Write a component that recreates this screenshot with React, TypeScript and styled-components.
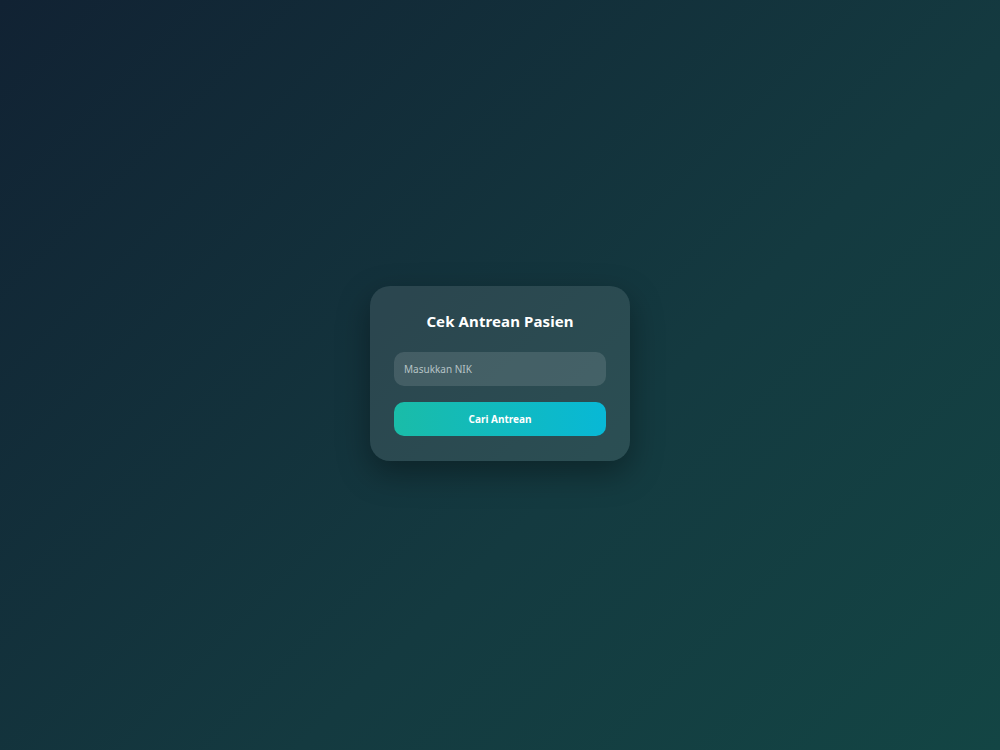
import React, {useState} from 'react'
import styled, {createGlobalStyle} from 'styled-components'

const GlobalStyle = createGlobalStyle`
  * {
    box-sizing: border-box;
  }
  html, body {
    margin: 0;
    padding: 0;
  }
  body {
    font-family: 'Noto Sans', 'Open Sans', 'Liberation Sans', sans-serif;
  }
`

const Page = styled.main`
  min-height: 100vh;
  padding-bottom: 4px;
  display: flex;
  align-items: center;
  justify-content: center;
  background: linear-gradient(135deg, #112233 0%, #143a40 60%, #134544 100%);
`

const Card = styled.form`
  width: 260px;
  padding: 24px 24px 25px;
  border-radius: 20px;
  background: rgba(255, 255, 255, 0.1);
  box-shadow: 0 12px 32px rgba(0, 0, 0, 0.35);
  display: flex;
  flex-direction: column;
`

const Title = styled.h2`
  margin: 0 0 20px;
  text-align: center;
  color: #ffffff;
  font-size: 15px;
  font-weight: 700;
  line-height: 22px;
  letter-spacing: 0.1px;
`

const Input = styled.input`
  width: 100%;
  height: 34px;
  padding: 0 10px;
  border: none;
  border-radius: 10px;
  background: rgba(255, 255, 255, 0.12);
  color: #ffffff;
  font-family: inherit;
  font-size: 10px;
  outline: none;
  margin-bottom: 16px;
  &::placeholder {
    color: #b6c3c5;
  }
`

const Button = styled.button`
  width: 100%;
  height: 34px;
  border: none;
  border-radius: 10px;
  background: linear-gradient(90deg, #1abca8 0%, #08b8d6 100%);
  color: #ffffff;
  font-family: inherit;
  font-size: 10px;
  font-weight: 700;
  cursor: pointer;
`

const App: React.FC = () => {
  const [nik, setNik] = useState('')

  return (
    <>
      <GlobalStyle />
      <Page>
        <Card onSubmit={(e) => e.preventDefault()}>
          <Title>Cek Antrean Pasien</Title>
          <Input
            type='text'
            placeholder='Masukkan NIK'
            value={nik}
            onChange={(e) => setNik(e.target.value)}
          />
          <Button type='submit'>Cari Antrean</Button>
        </Card>
      </Page>
    </>
  )
}

export default App
